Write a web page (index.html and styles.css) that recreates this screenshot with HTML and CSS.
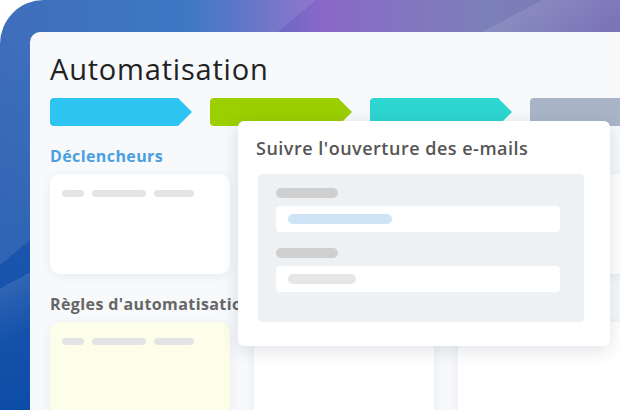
FILE: index.html
```html
<!DOCTYPE html>
<html lang="fr">
<head>
    <meta charset="UTF-8">
    <title>Automatisation</title>
    <link rel="stylesheet" href="styles.css">
</head>
<body>

<div class="backdrop">
    <div class="panel">
        <h1>Automatisation</h1>

        <div class="steps">
            <div class="step step-blue"></div>
            <div class="step step-green"></div>
            <div class="step step-teal"></div>
            <div class="step step-grey"></div>
        </div>

        <h2 class="section-title active">Déclencheurs</h2>
        <div class="columns">
            <div class="card">
                <div class="pills">
                    <span class="pill small"></span>
                    <span class="pill wide"></span>
                    <span class="pill mid"></span>
                </div>
            </div>
            <div class="card"></div>
            <div class="card"></div>
        </div>

        <h2 class="section-title">Règles d'automatisation</h2>
        <div class="columns">
            <div class="card card-yellow">
                <div class="pills">
                    <span class="pill small"></span>
                    <span class="pill wide"></span>
                    <span class="pill mid"></span>
                </div>
            </div>
            <div class="card"></div>
            <div class="card"></div>
        </div>

        <div class="popup">
            <h3>Suivre l'ouverture des e-mails</h3>
            <div class="form-box">
                <div class="field">
                    <span class="label-pill"></span>
                    <div class="input"><span class="value-pill blue"></span></div>
                </div>
                <div class="field">
                    <span class="label-pill"></span>
                    <div class="input"><span class="value-pill grey"></span></div>
                </div>
            </div>
        </div>
    </div>
</div>

</body>
</html>
```

FILE: styles.css
```css
html, body {
    margin: 0;
    height: 100%;
    overflow: hidden;
    background: #fff;
}
body {
    font-family: "Open Sans", "DejaVu Sans", sans-serif;
}
.backdrop {
    height: 100%;
    padding: 32px 0 0 30px;
    box-sizing: border-box;
    border-top-left-radius: 44px;
    background:
        linear-gradient(320deg, rgba(255,255,255,0) 71.5%, rgba(255,255,255,0.09) 71.5%),
        linear-gradient(152deg, rgba(255,255,255,0) 39%, rgba(255,255,255,0.1) 39%, rgba(255,255,255,0) 47%),
        linear-gradient(to bottom, rgba(12,76,166,0) 10%, rgba(12,76,166,0.95) 100%),
        linear-gradient(to right, #2c5fb5 0%, #2a6bbf 30%, #8a68c8 52%, #7c80b9 78%, #7c74b8 100%);
    background-color: #2a5cb4;
}
.panel {
    position: relative;
    height: 100%;
    padding: 0 0 0 20px;
    background: #f7f9fb;
    border-top-left-radius: 10px;
    box-sizing: border-box;
}
h1 {
    margin: 0;
    padding-top: 20px;
    height: 46px;
    font-size: 29px;
    font-weight: 400;
    letter-spacing: 0.8px;
    line-height: 34px;
    color: #222;
}
.steps {
    display: flex;
    gap: 18px;
}
.step {
    flex: 0 0 142px;
    height: 28px;
    border-radius: 4px;
    clip-path: polygon(0 0, calc(100% - 14px) 0, 100% 50%, calc(100% - 14px) 100%, 0 100%);
}
.step-blue { background: #2ec4f1; }
.step-green { background: #9ccf00; }
.step-teal { background: #2dd6d0; }
.step-grey { background: #a9b5c7; clip-path: none; flex-basis: 200px; }

.section-title {
    margin: 0;
    height: 48px;
    line-height: 60px;
    font-size: 16px;
    font-weight: 700;
    letter-spacing: 0.4px;
    color: #666;
}
.section-title.active {
    color: #4a9fe0;
}
.columns {
    display: grid;
    grid-template-columns: 180px 180px 180px;
    gap: 24px;
}
.card {
    height: 100px;
    background: #fff;
    border-radius: 10px;
    box-shadow: 0 2px 10px rgba(40, 60, 90, 0.07);
}
.card-yellow {
    height: 120px;
    background: #fdfee9;
}
.pills {
    display: flex;
    gap: 8px;
    padding: 16px 12px;
}
.pill {
    height: 7px;
    border-radius: 4px;
    background: #e4e4e4;
}
.pill.small { width: 22px; }
.pill.wide { width: 54px; }
.pill.mid { width: 40px; }

.popup {
    position: absolute;
    left: 208px;
    top: 89px;
    width: 372px;
    height: 225px;
    box-sizing: border-box;
    padding: 0 26px 0 20px;
    background: #fff;
    border-radius: 6px;
    box-shadow: 0 4px 18px rgba(30, 50, 80, 0.14);
}
.popup h3 {
    margin: 0 0 0 -2px;
    height: 53px;
    line-height: 55px;
    font-size: 18px;
    font-weight: 600;
    letter-spacing: 0.5px;
    color: #555;
}
.form-box {
    height: 148px;
    padding: 14px 24px 0 18px;
    box-sizing: border-box;
    background: #eef1f4;
    border-radius: 4px;
}
.field {
    margin-bottom: 16px;
}
.label-pill {
    display: block;
    width: 62px;
    height: 10px;
    border-radius: 5px;
    background: #cfcfcf;
}
.input {
    margin-top: 8px;
    height: 26px;
    padding: 8px 12px;
    box-sizing: border-box;
    background: #fff;
    border-radius: 4px;
}
.value-pill {
    display: block;
    height: 10px;
    border-radius: 5px;
}
.value-pill.blue { width: 104px; background: #cfe4f7; }
.value-pill.grey { width: 68px; background: #e6e6e6; }
```
